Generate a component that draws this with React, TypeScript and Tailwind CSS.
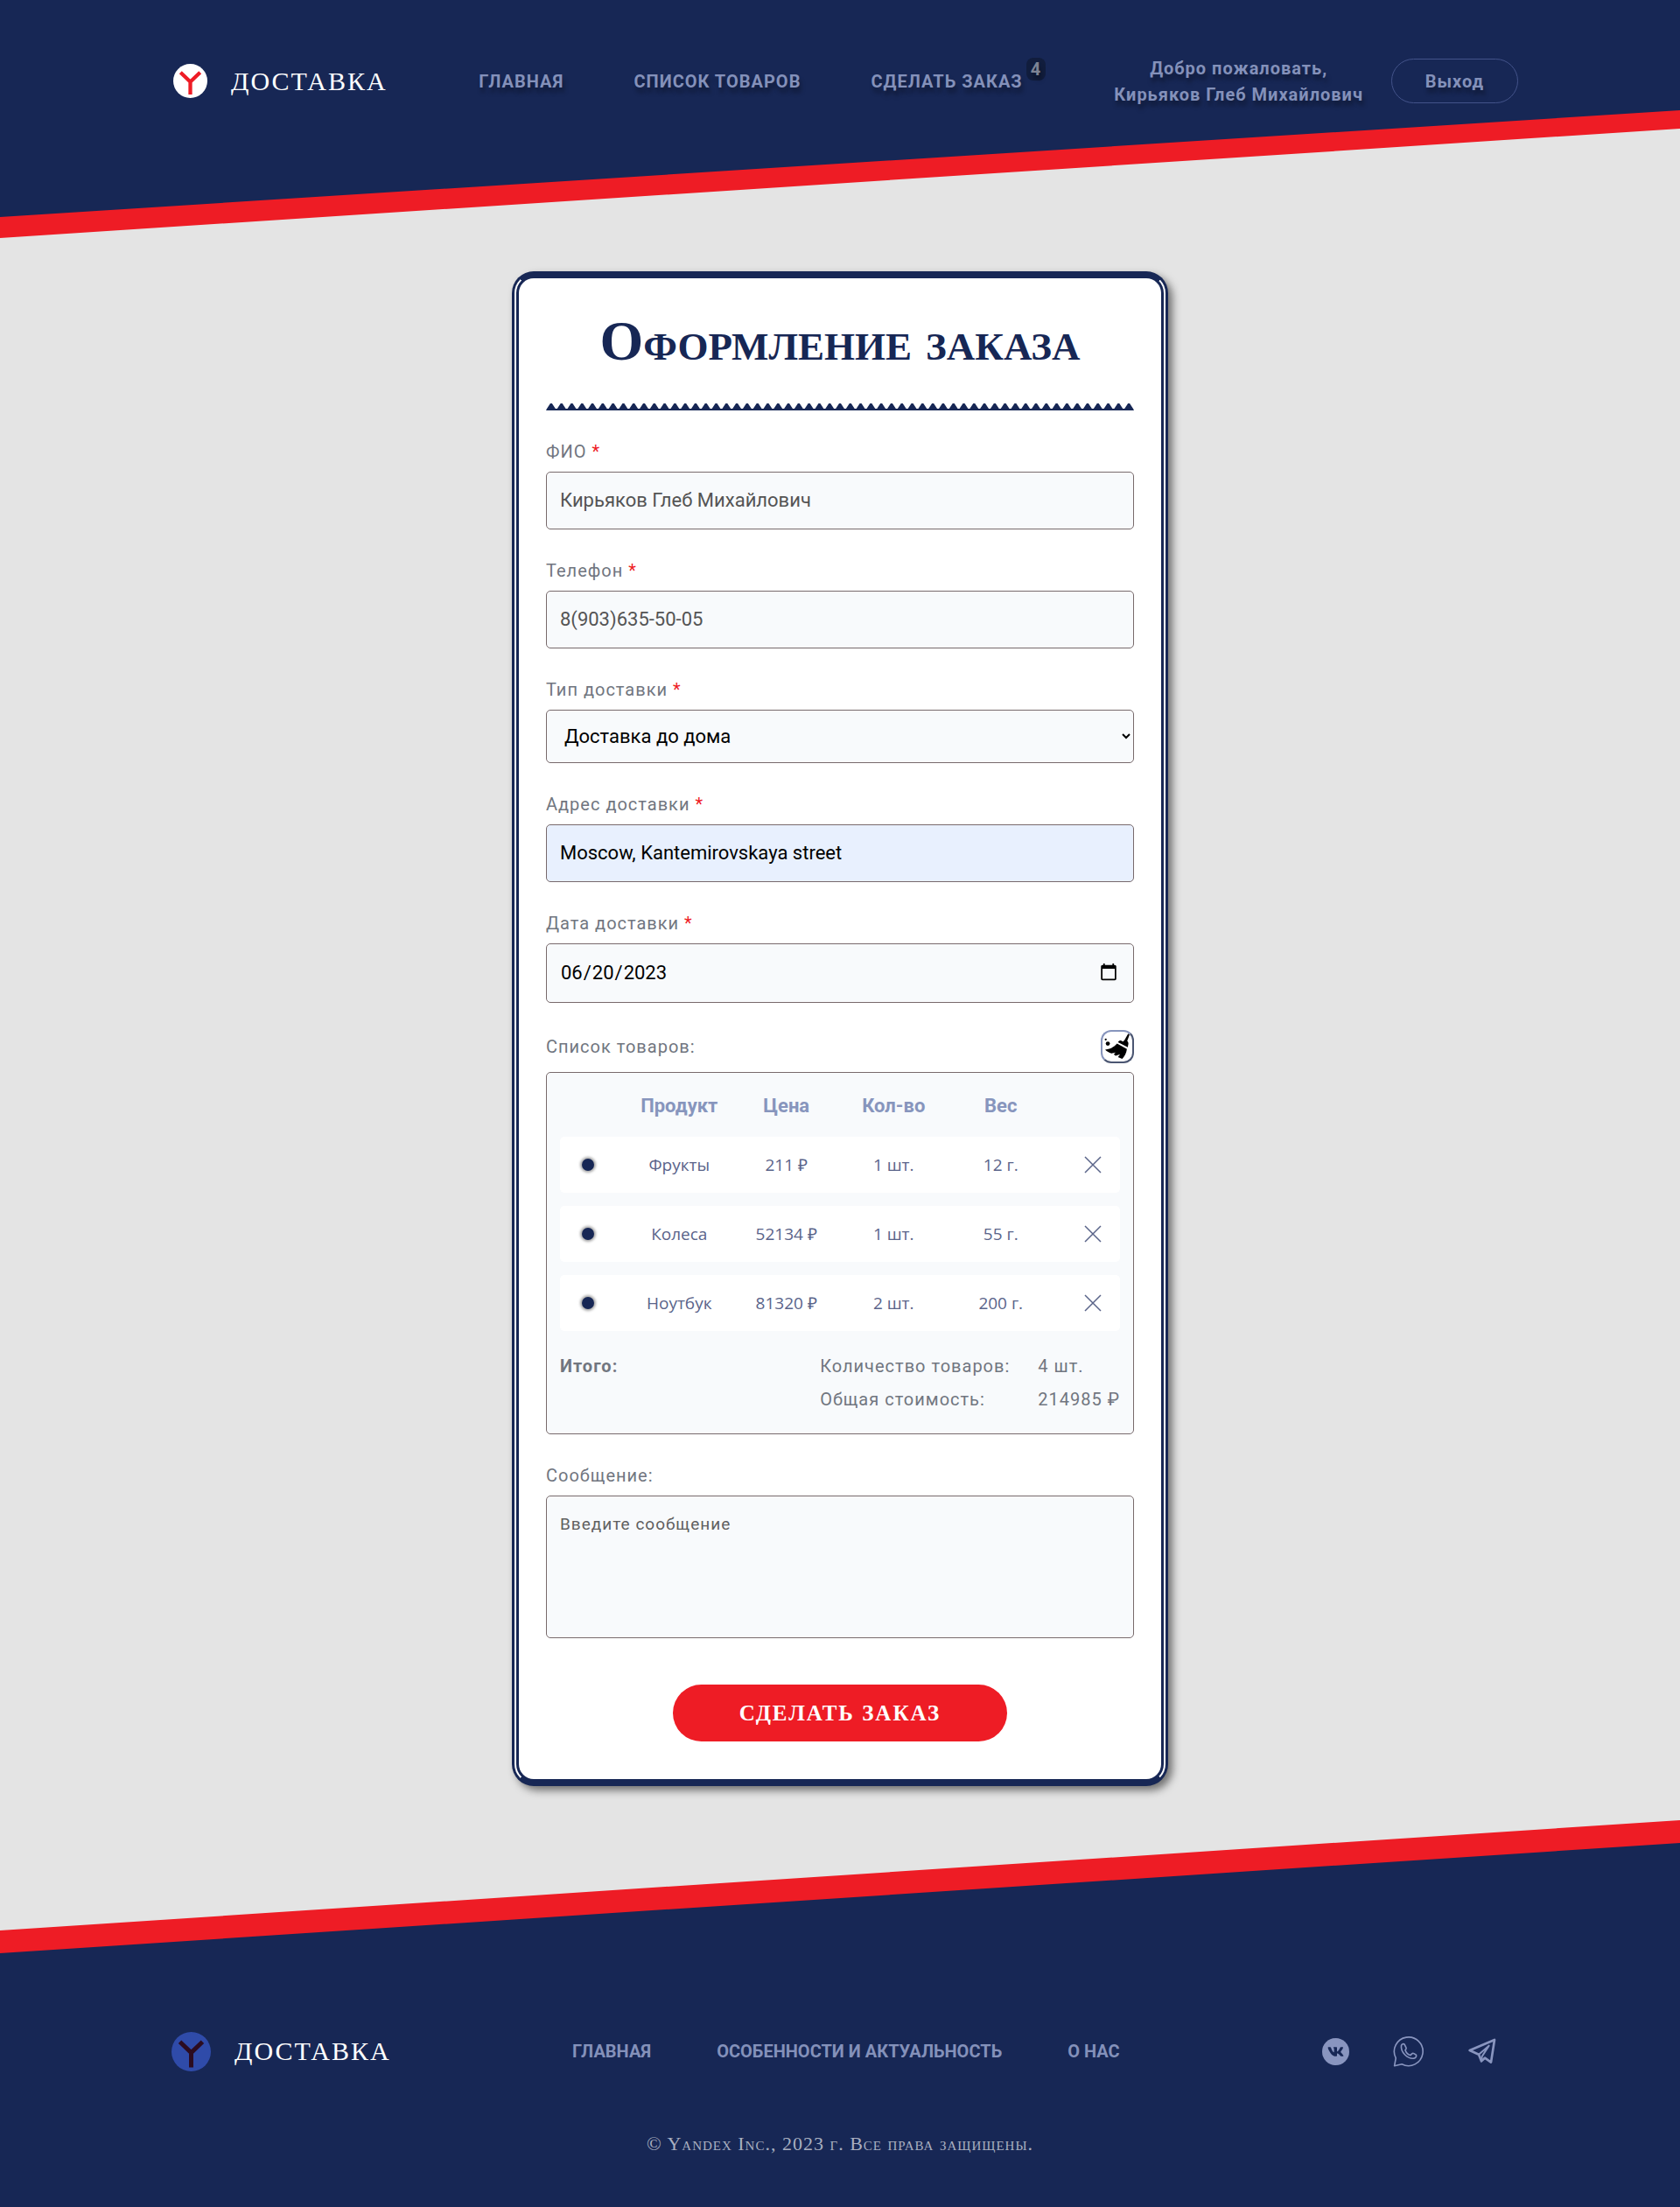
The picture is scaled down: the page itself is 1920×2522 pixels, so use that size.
import React from "react";
import { FaVk } from "react-icons/fa";

const SERIF = "font-['Liberation_Serif',serif]";

function LogoMark({ className, disc, letter }: { className: string; disc: string; letter: string }) {
  return (
    <svg viewBox="0 0 40 40" className={className} aria-hidden="true">
      <circle cx="20" cy="20" r="20" fill={disc} />
      <path d="M8.5 10 L20 21 L31.5 10 M20 21 V36" fill="none" stroke={letter} strokeWidth="4.4" strokeLinejoin="round" />
    </svg>
  );
}

function Required() {
  return <span className="text-[#ee1c25]">*</span>;
}

function Label({ htmlFor, children, required }: { htmlFor: string; children: React.ReactNode; required?: boolean }) {
  return (
    <label htmlFor={htmlFor} className="mb-[11px] block text-[20px] leading-6 tracking-[1px] text-[#717680]">
      {children} {required && <Required />}
    </label>
  );
}

function ZigZag() {
  const teeth = Array.from({ length: 57 }, (_, i) => `${i * 12 + 1},6 ${i * 12 + 5},0 ${i * 12 + 7},0 ${i * 12 + 11},6`).join(" ");
  return (
    <svg viewBox="0 0 684 8" preserveAspectRatio="none" className="block h-2 w-full" aria-hidden="true">
      <polygon points={`0,8 ${teeth} 684,8`} fill="#172755" />
    </svg>
  );
}

function BroomIcon() {
  return (
    <svg viewBox="98 64 88 88" className="h-[30px] w-[30px]" aria-hidden="true">
      <circle cx="103" cy="84" r="3.4" />
      <circle cx="110" cy="98" r="7" />
      <path d="M178 65 L183 68 L175 89 C179 93 180 98 178 103 L177 110 L144 93 C147 89 151 87 155 88 L161 91 L166 86 Z" />
      <path d="M141 98 L174 116 C172 130 166 141 158 149 L144 143 L151 134 L136 139 L130 134 L136 128 L122 131 C114 128 107 124 101 118 C117 117 130 110 141 98 Z" />
    </svg>
  );
}

function WhatsAppIcon() {
  return (
    <svg viewBox="276 45 108 110" className="h-9 w-9" fill="none" stroke="#8995bf" strokeWidth="5" strokeLinejoin="round" aria-hidden="true">
      <path d="M280 151 L285 124 A50 50 0 1 1 306 145 Z" />
      <path d="M304 80 C306 74 312 73 315 76 L321 88 C322 91 320 94 318 96 C320 104 327 111 336 114 L341 109 C343 107 346 107 348 108 L356 113 C358 118 354 124 347 125 C326 127 301 104 304 80 Z" />
    </svg>
  );
}

function TelegramIcon() {
  return (
    <svg viewBox="532 56 96 90" className="h-8 w-8" fill="none" stroke="#8995bf" strokeWidth="8" strokeLinejoin="round" strokeLinecap="round" aria-hidden="true">
      <path d="M537 98 L622 62 L610 139 L589 124 L577 135 L568 112 Z" />
      <path d="M568 112 L603 82 L579 119 L577 135" strokeWidth="6" />
    </svg>
  );
}

const navLinks = ["ГЛАВНАЯ", "СПИСОК ТОВАРОВ", "СДЕЛАТЬ ЗАКАЗ"];
const footerLinks = ["ГЛАВНАЯ", "ОСОБЕННОСТИ И АКТУАЛЬНОСТЬ", "О НАС"];
const products = [
  { name: "Фрукты", price: "211 ₽", count: "1 шт.", weight: "12 г." },
  { name: "Колеса", price: "52134 ₽", count: "1 шт.", weight: "55 г." },
  { name: "Ноутбук", price: "81320 ₽", count: "2 шт.", weight: "200 г." },
];

function Header() {
  return (
    <header className="bg-[#ee1c25] [clip-path:polygon(0_0,100%_0,100%_147px,0_100%)]">
      <div className="flex h-[272px] items-start justify-between bg-[#172755] pr-[185px] pl-[198px] pt-[67px] [clip-path:polygon(0_0,100%_0,100%_126px,0_248px)]">
        <a href="#" className="flex h-[51px] items-center gap-[27px]">
          <LogoMark className="h-[39px] w-[39px]" disc="#ffffff" letter="#ee1c25" />
          <span className={`${SERIF} text-[30px] leading-[34px] tracking-[2px] text-white`}>ДОСТАВКА</span>
        </a>
        <nav className="flex h-[51px] items-center gap-20 text-[20px] font-bold tracking-[1px] whitespace-nowrap text-[#8491ba] [text-shadow:2px_6px_5px_rgba(0,0,0,0.35)]">
          {navLinks.map((text, i) => (
            <a key={text} href="#" className="relative">
              {text}
              {i === 2 && (
                <span className="absolute -top-3 left-full ml-1 rounded-lg bg-[#111d3d] px-[5px] leading-[26px] text-[#7d8394]">4</span>
              )}
            </a>
          ))}
        </nav>
        <div className="flex h-[51px] items-center gap-8 text-[20px] font-bold tracking-[1px] text-[#8491ba] [text-shadow:2px_6px_5px_rgba(0,0,0,0.35)]">
          <p className="text-center leading-[30px] whitespace-nowrap">
            Добро пожаловать,
            <br />
            Кирьяков Глеб Михайлович
          </p>
          <button type="button" className="h-[51px] w-[145px] rounded-full border border-[#43538a] font-bold tracking-[1px] [text-shadow:2px_6px_5px_rgba(0,0,0,0.35)]">
            Выход
          </button>
        </div>
      </div>
    </header>
  );
}

function ProductList() {
  return (
    <div className="rounded-[5px] border border-[#786a6c] bg-[#f8fafc] px-[15px] pt-px pb-5">
      <table className="w-full table-fixed border-separate border-spacing-x-0 border-spacing-y-[15px] text-center">
        <colgroup>
          <col className="w-[75px]" />
          <col />
          <col />
          <col />
          <col />
          <col className="w-[75px]" />
        </colgroup>
        <thead>
          <tr className="h-[42px] text-[22px] text-[#8795bd]">
            <th />
            <th>Продукт</th>
            <th>Цена</th>
            <th>Кол-во</th>
            <th>Вес</th>
            <th />
          </tr>
        </thead>
        <tbody className="font-['Open_Sans',sans-serif] text-[19px] text-[#5a648a]">
          {products.map((p) => (
            <tr key={p.name} className="h-16 [&>td]:bg-white">
              <td className="rounded-l-[5px] pr-3">
                <span className="mx-auto block h-[14px] w-[14px] rounded-full bg-[#172755] shadow-[0_0_3px_2px_rgba(0,0,0,0.35)]" />
              </td>
              <td>{p.name}</td>
              <td>{p.price}</td>
              <td>{p.count}</td>
              <td>{p.weight}</td>
              <td className="rounded-r-[5px] pl-3">
                <button type="button" aria-label={`Удалить ${p.name}`} className="mx-auto block">
                  <svg viewBox="0 0 20 20" className="h-5 w-5" stroke="#5a6489" strokeWidth="1.5" aria-hidden="true">
                    <path d="M1 1 L19 19 M19 1 L1 19" />
                  </svg>
                </button>
              </td>
            </tr>
          ))}
        </tbody>
      </table>
      <div className="mt-[6px] flex justify-between text-[20px] leading-[38px] tracking-[1px] text-[#717680]">
        <b>Итого:</b>
        <dl className="grid grid-cols-[auto_auto] gap-x-8">
          <dt>Количество товаров:</dt>
          <dd>4 шт.</dd>
          <dt>Общая стоимость:</dt>
          <dd>214985 ₽</dd>
        </dl>
      </div>
    </div>
  );
}

const FIELD = "block w-full rounded-[5px] border border-[#786a6c] px-[15px] pb-[2px] text-[22px]";

function OrderForm() {
  return (
    <form className="mx-auto w-full max-w-[750px] rounded-[25px] border-8 border-[#172755] [border-style:solid_double] bg-white px-[31px] pb-[43px] shadow-[5px_5px_10px_rgba(0,0,0,0.5)]">
      <h1 className={`${SERIF} pt-10 pb-[3px] text-center text-[64px] leading-[64px] font-bold whitespace-nowrap [font-variant:small-caps] text-[#172755]`}>
        Оформление заказа
      </h1>
      <div className="mt-9 mb-[35px]">
        <ZigZag />
      </div>
      <div className="flex flex-col gap-[35px]">
        <div>
          <Label htmlFor="name" required>ФИО</Label>
          <input id="name" disabled defaultValue="Кирьяков Глеб Михайлович" className={`${FIELD} h-[66px] bg-[#f8fafc] text-[#545454]`} />
        </div>
        <div>
          <Label htmlFor="phone" required>Телефон</Label>
          <input id="phone" disabled defaultValue="8(903)635-50-05" className={`${FIELD} h-[66px] bg-[#f8fafc] text-[#545454]`} />
        </div>
        <div>
          <Label htmlFor="type" required>Тип доставки</Label>
          <select id="type" className="block h-[61px] w-full rounded-[5px] border border-[#786a6c] bg-[#f8fafc] pl-4 text-[22px] text-black">
            <option>Доставка до дома</option>
          </select>
        </div>
        <div>
          <Label htmlFor="address" required>Адрес доставки</Label>
          <input id="address" defaultValue="Moscow, Kantemirovskaya street" className={`${FIELD} h-[66px] bg-[#e8f0fe] text-black`} />
        </div>
        <div>
          <Label htmlFor="date" required>Дата доставки</Label>
          <input id="date" type="date" defaultValue="2023-06-20" className={`${FIELD} h-[68px] bg-[#f8fafc] text-black`} />
        </div>
      </div>
      <section>
        <div className="mt-[31px] mb-[10px] flex items-center justify-between text-[20px] leading-6 tracking-[1px] text-[#717680]">
          <h2>Список товаров:</h2>
          <button type="button" aria-label="Очистить список" className="flex h-[38px] w-[38px] items-center justify-center rounded-xl border-2 border-t-[#8795bd] border-r-[#4b5672] border-b-[#4b5672] border-l-[#8795bd] bg-white text-black">
            <BroomIcon />
          </button>
        </div>
        <ProductList />
      </section>
      <div className="mt-[35px]">
        <Label htmlFor="message">Сообщение:</Label>
        <textarea id="message" placeholder="Введите сообщение" className="block h-[163px] w-full resize-none rounded-[5px] border border-[#786a6c] bg-[#f8fafc] px-[15px] py-5 text-[19px] leading-6 tracking-[1px] placeholder:text-[#606060]" />
      </div>
      <button type="submit" className={`${SERIF} mx-auto mt-[53px] block h-[65px] w-[382px] rounded-full bg-[#ee1c25] text-[25px] font-bold tracking-[2px] text-white`}>
        СДЕЛАТЬ ЗАКАЗ
      </button>
    </form>
  );
}

function Footer() {
  return (
    <footer className="bg-[#ee1c25] [clip-path:polygon(0_126px,100%_0,100%_100%,0_100%)]">
      <div className="bg-[#172755] pt-[241px] pb-[58px] [clip-path:polygon(0_152px,100%_26px,100%_100%,0_100%)]">
        <div className="flex h-[46px] items-center justify-between pr-[210px] pl-[196px]">
          <a href="#" className="flex items-center gap-[27px]">
            <LogoMark className="h-[45px] w-[45px]" disc="#2f4ba9" letter="#2c0c20" />
            <span className={`${SERIF} text-[30px] leading-[34px] tracking-[2px] text-white`}>ДОСТАВКА</span>
          </a>
          <nav className="flex gap-[75px] text-[20px] font-bold text-[#8491ba]">
            {footerLinks.map((text) => (
              <a key={text} href="#">{text}</a>
            ))}
          </nav>
          <div className="flex items-center gap-[50px] pl-6">
            <a href="#" aria-label="ВКонтакте" className="flex h-[31px] w-[31px] items-center justify-center rounded-full bg-[#8995bf] text-[#172755]">
              <FaVk className="h-[19px] w-[19px]" />
            </a>
            <a href="#" aria-label="WhatsApp"><WhatsAppIcon /></a>
            <a href="#" aria-label="Telegram"><TelegramIcon /></a>
          </div>
        </div>
        <p className={`${SERIF} mt-[69px] text-center text-[22px] leading-7 tracking-[1px] [font-variant:small-caps] text-[#a9afc0]`}>
          © Yandex Inc., 2023 г. Все права защищены.
        </p>
      </div>
    </footer>
  );
}

export default function App() {
  return (
    <div className="bg-[#e4e4e4] font-[Roboto,sans-serif]">
      <Header />
      <main className="pt-[38px] pb-[39px]">
        <OrderForm />
      </main>
      <Footer />
    </div>
  );
}
